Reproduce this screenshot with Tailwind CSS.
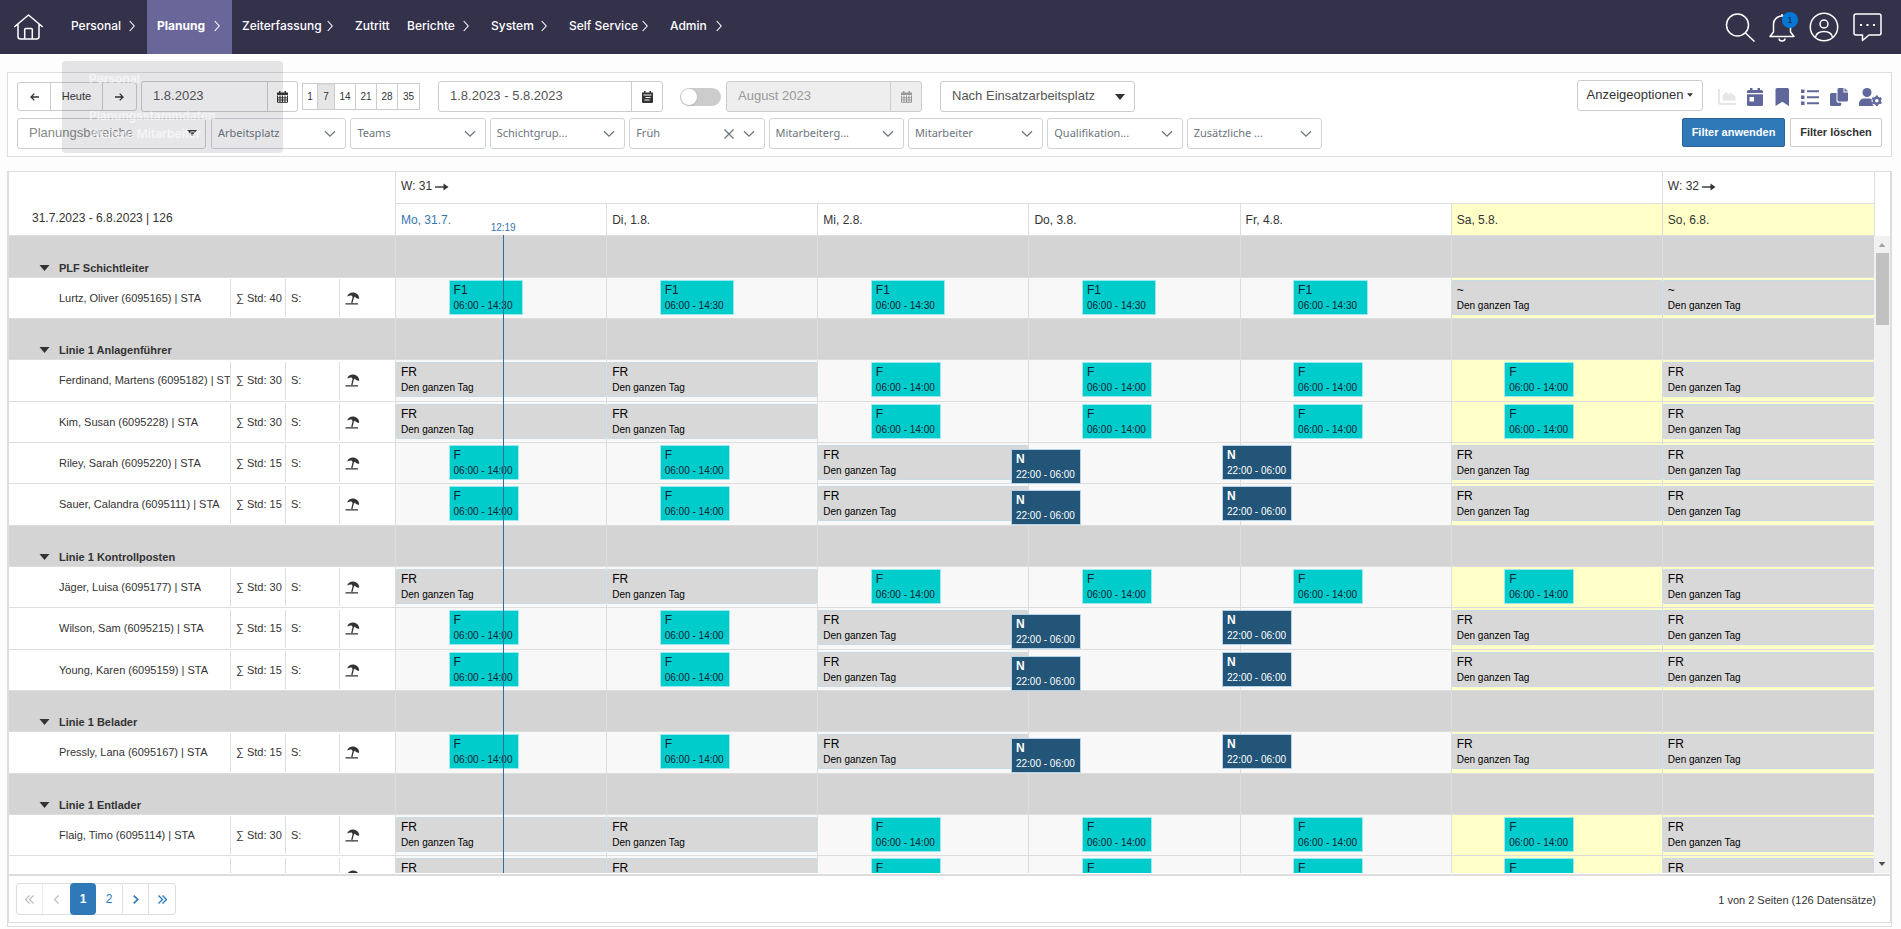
<!DOCTYPE html>
<html lang="de">
<head>
    <meta charset="UTF-8">
    <meta name="viewport" content="width=device-width, initial-scale=1.0">
    <title>Planung</title>
    <script src="https://cdn.jsdelivr.net/npm/@tailwindcss/browser@4"></script>
</head>
<body class="h-screen flex flex-col overflow-hidden bg-[#fdfdfd] text-[#333] font-['Liberation_Sans',Arial,sans-serif]">

    <!-- Icons used more than once -->
    <svg class="hidden">
        <symbol id="chevron-right" viewBox="0 0 6 12"><path d="M.7 1 5.2 6 .7 11" fill="none" stroke="currentColor" stroke-width="1.1"/></symbol>
        <symbol id="chevron-down" viewBox="0 0 12 8"><path d="M1 1.2 6 6.2l5-5" fill="none" stroke="currentColor" stroke-width="1.3"/></symbol>
        <symbol id="caret" viewBox="0 0 10 6"><path d="M0 0h10L5 6z" fill="currentColor"/></symbol>
        <symbol id="calendar" viewBox="0 0 11 12"><path d="M2 0h1.5v1.5h4V0H9v1.5h2V4H0V1.5h2z" fill="currentColor"/><path d="M.5 4.5v6.8h10V4.5M3 4.5v7M5.5 4.5v7M8 4.5v7M.5 6.8h10M.5 9h10" fill="none" stroke="currentColor" stroke-width="1"/></symbol>
        <symbol id="beach" viewBox="0 0 15 13"><path d="M2.2 4.5C3 1.5 6.500 0 9.500.8c3 .8 5 3.200 4.600 6.200l-3.200-1-.9-1.600-1 1-1.300-.4C7.200 4 6.500 3.200 5.300 3.600z" fill="currentColor"/><path d="M8.600 4 6.800 11M.5 11.800h12.500" fill="none" stroke="currentColor" stroke-width="1.300"/></symbol>
        <symbol id="arrow" viewBox="0 0 14 8"><path d="M0 4h11" stroke="currentColor" stroke-width="1.400"/><path d="M8.500.5 13.500 4l-5 3.500z" fill="currentColor"/></symbol>
    </svg>

    <!-- Navigation -->
    <header class="h-[54px] shrink-0 bg-[#34324b] text-white flex items-stretch">
        <a href="#" aria-label="Start" class="w-[61px] flex items-center pl-[14px]">
            <svg class="w-[29px] h-[26px]" viewBox="0 0 29 26" fill="none" stroke="currentColor" stroke-width="1.500" stroke-linejoin="round" stroke-linecap="round"><path d="M.8 12.500 14.500 1l13.700 11.500M4 10v12.500Q4 25 6.500 25h16q2.500 0 2.500-2.500V10M10.700 25V15.500q0-1 1-1h5.600q1 0 1 1V25"/></svg>
        </a>
        <nav class="flex items-stretch text-[12px] font-medium font-[Inter,sans-serif]">
            <a href="#" class="w-[86px] flex items-center justify-between pl-[10px] pr-[12px] pb-[2px]">Personal<svg class="w-[6px] h-[12px]"><use href="#chevron-right"/></svg></a>
            <a href="#" class="w-[85px] flex items-center justify-between pl-[10px] pr-[12px] pb-[2px] bg-[#696799] font-bold">Planung<svg class="w-[6px] h-[12px]"><use href="#chevron-right"/></svg></a>
            <a href="#" class="w-[113px] flex items-center justify-between pl-[10px] pr-[12px] pb-[2px]">Zeiterfassung<svg class="w-[6px] h-[12px]"><use href="#chevron-right"/></svg></a>
            <a href="#" class="w-[52px] flex items-center px-[10px] pb-[2px]">Zutritt</a>
            <a href="#" class="w-[84px] flex items-center justify-between pl-[10px] pr-[12px] pb-[2px]">Berichte<svg class="w-[6px] h-[12px]"><use href="#chevron-right"/></svg></a>
            <a href="#" class="w-[78px] flex items-center justify-between pl-[10px] pr-[12px] pb-[2px]">System<svg class="w-[6px] h-[12px]"><use href="#chevron-right"/></svg></a>
            <a href="#" class="w-[101px] flex items-center justify-between pl-[10px] pr-[12px] pb-[2px]">Self Service<svg class="w-[6px] h-[12px]"><use href="#chevron-right"/></svg></a>
            <a href="#" class="w-[74px] flex items-center justify-between pl-[10px] pr-[12px] pb-[2px]">Admin<svg class="w-[6px] h-[12px]"><use href="#chevron-right"/></svg></a>
        </nav>
        <div class="ml-auto flex items-center gap-[14px] pr-[19px]">
            <button aria-label="Suche"><svg class="w-[30px] h-[29px]" viewBox="0 0 30 29" fill="none" stroke="currentColor" stroke-width="1.500"><circle cx="12.500" cy="12" r="11"/><path d="m20.500 20 9 8.500"/></svg></button>
            <button aria-label="Meldungen" class="relative">
                <svg class="w-[26px] h-[29px]" viewBox="0 0 26 29" fill="none" stroke="currentColor" stroke-width="1.500" stroke-linejoin="round"><path d="M13 1v2M4.500 19V11a8.500 8 0 0 1 17 0v8l3.500 4.500H1zM10 25.500a3 2.500 0 0 0 6 0"/></svg>
                <span class="absolute -top-px left-[13px] w-4 h-4 rounded-full bg-[#0078d7] text-[#222] text-[9px] leading-4">1</span>
            </button>
            <button aria-label="Profil"><svg class="w-[30px] h-[30px]" viewBox="0 0 30 30" fill="none" stroke="currentColor" stroke-width="1.500"><circle cx="15" cy="15" r="13.700"/><circle cx="15" cy="12" r="4"/><path d="M6.500 25.500c0-8 17-8 17 0"/></svg></button>
            <button aria-label="Chat"><svg class="w-[29px] h-[29px]" viewBox="0 0 29 29" fill="none" stroke="currentColor" stroke-width="1.500" stroke-linejoin="round"><path d="M3 1h23q2 0 2 2v17q0 2-2 2H16l-6.500 5.500V22H3q-2 0-2-2V3q0-2 2-2z"/><path d="M7 12h2M13.500 12h2M20 12h2" stroke-width="2"/></svg></button>
        </div>
    </header>

    <!-- Fading menu of the active entry -->
    <div class="absolute z-30 left-[62px] top-[61px] w-[221px] h-[92px] rounded-sm bg-[#34324b]/12 pointer-events-none pl-[27px] pt-[9px] text-[12px] leading-[18px] font-semibold text-white/60 font-[Inter,sans-serif]">
        <p>Personal</p>
        <p class="mt-[19px]">Planungsstammdaten</p>
        <p>Weitere Mitarbeiter</p>
    </div>

    <main class="flex-1 min-h-0 flex flex-col gap-[14px] pl-[7px] pr-[9px] pt-[18px] pb-[2px]">

        <!-- Toolbar -->
        <section class="shrink-0 bg-white border border-[#ddd] pl-[9px] pr-[9px] pt-[8px] pb-[7px]">
            <div class="flex items-center h-[31px]">
                <div class="flex h-[29px] border border-[#ccc] rounded-[3px] bg-white divide-x divide-[#ccc] text-[11px]">
                    <button aria-label="Zurück" class="w-[33px] grid place-items-center"><svg class="w-[9px] h-[8px]" viewBox="0 0 9 8" fill="none" stroke="currentColor" stroke-width="1.300"><path d="M9 4H1M4.300.6 1 4l3.300 3.400"/></svg></button>
                    <button class="w-[52px]">Heute</button>
                    <button aria-label="Weiter" class="w-[33px] grid place-items-center"><svg class="w-[9px] h-[8px]" viewBox="0 0 9 8" fill="none" stroke="currentColor" stroke-width="1.300"><path d="M0 4h8M4.700.6 8 4 4.700 7.400"/></svg></button>
                </div>
                <div class="ml-[4px] flex w-[157px] h-[31px] border border-[#ccc] rounded-[3px] bg-white">
                    <input type="text" aria-label="Datum" value="1.8.2023" class="flex-1 min-w-0 pl-[11px] pb-[2px] text-[13px] text-[#555] border-r border-[#ccc]">
                    <button aria-label="Kalender" class="w-[29px] grid place-items-center"><svg class="w-[11px] h-[12px]"><use href="#calendar"/></svg></button>
                </div>
                <div class="ml-[4px] flex h-[27px] border border-[#ccc] bg-white divide-x divide-[#ccc] text-[10px]">
                    <button class="w-[15px]">1</button>
                    <button class="w-[17px] bg-[#e6e6e6] inset-shadow-xs">7</button>
                    <button class="w-[21px]">14</button>
                    <button class="w-[21px]">21</button>
                    <button class="w-[21px]">28</button>
                    <button class="w-[21px]">35</button>
                </div>
                <div class="ml-[18px] flex w-[225px] h-[31px] border border-[#ccc] rounded-[3px] bg-white">
                    <input type="text" aria-label="Zeitraum" value="1.8.2023 - 5.8.2023" class="flex-1 min-w-0 pl-[11px] pb-[2px] text-[13px] text-[#555] border-r border-[#ccc]">
                    <button aria-label="Zeitraum wählen" class="w-[30px] grid place-items-center"><svg class="w-[11px] h-[12px]" viewBox="0 0 11 12"><path fill="currentColor" fill-rule="evenodd" d="M2 0h1.500v1.500h4V0H9v1.500h2v9.500q0 1-1 1H1q-1 0-1-1V1.500h2zM1.500 3.500v1h8v-1zM3.500 6v1h5V6zM2.500 8.500v1h5v-1z"/></svg></button>
                </div>
                <label class="ml-[17px] relative w-[41px] h-[18px] rounded-full bg-[#ccc]">
                    <input type="checkbox" aria-label="Monat verwenden" class="peer appearance-none absolute inset-0">
                    <span class="absolute left-px top-px w-4 h-4 rounded-full bg-white shadow"></span>
                </label>
                <div class="ml-[5px] flex w-[196px] h-[31px] border border-[#ccc] rounded-[3px] bg-[#eee] text-[#999]">
                    <input type="text" aria-label="Monat" value="August 2023" disabled class="flex-1 min-w-0 pl-[11px] pb-[2px] text-[13px] border-r border-[#ccc]">
                    <button aria-label="Monat wählen" disabled class="w-[30px] grid place-items-center"><svg class="w-[11px] h-[12px]"><use href="#calendar"/></svg></button>
                </div>
                <div class="relative ml-[18px] w-[195px] h-[31px]">
                    <select aria-label="Ansicht" class="appearance-none w-full h-full pl-[11px] pb-[2px] border border-[#ccc] rounded-[3px] bg-white text-[13px] text-[#555]">
                        <option>Nach Einsatzarbeitsplatz</option>
                    </select>
                    <svg class="absolute right-[10px] top-[13px] w-[10px] h-[6px] pointer-events-none"><use href="#caret"/></svg>
                </div>
                <button class="ml-auto w-[126px] h-[31px] mb-[2px] border border-[#ccc] rounded-[3px] bg-white text-[13px] flex items-center justify-center gap-[4px] pb-px">Anzeigeoptionen<svg class="w-[6px] h-[4px]" viewBox="0 0 10 6"><path d="M0 0h10L5 6z" fill="currentColor"/></svg></button>
                <div class="ml-[15px] flex items-center gap-[11px] text-[#60689b]">
                    <button aria-label="Diagramm" class="text-[#e6e6e6]"><svg class="w-[18px] h-[18px]" viewBox="0 0 18 18" fill="none"><path d="M1 1v13q0 2 2 2h15" stroke="currentColor" stroke-width="2"/><path fill="currentColor" d="M4.500 12.500v-5L8 4l2.500 2.500L13 4.500l4.500 4v4z"/></svg></button>
                    <button aria-label="Tagesansicht"><svg class="w-[16px] h-[18px]" viewBox="0 0 16 18"><path fill="currentColor" d="M3 0h2.500v2h5V0H13v2h1.500Q16 2 16 3.500V5H0V3.500Q0 2 1.500 2H3z"/><path fill="currentColor" fill-rule="evenodd" d="M0 6.200h16v10.300q0 1.500-1.500 1.500h-13Q0 18 0 16.500zM2.500 9v4.500H7V9z"/></svg></button>
                    <button aria-label="Lesezeichen"><svg class="w-[16px] h-[18px]" viewBox="0 0 16 18"><path fill="currentColor" d="M1.500 1.500Q1.500 0 3 0h10.500Q15 0 15 1.500V18l-6.700-4.200L1.500 18z"/></svg></button>
                    <button aria-label="Liste"><svg class="w-[18px] h-[18px]" viewBox="0 0 18 18"><path fill="currentColor" d="M0 1.500h3.500V5H0zM0 7.500h3.500V11H0zM0 13.500h3.500V17H0zM6 2.200h12v2H6zM6 8.200h12v2H6zM6 14.200h12v2H6z"/></svg></button>
                    <button aria-label="Kopieren"><svg class="w-[18px] h-[18px]" viewBox="0 0 18 18"><path fill="currentColor" d="M7.500 1.500Q7.500 0 9 0h4.500v4.500H18V12q0 1.500-1.500 1.500H9q-1.500 0-1.500-1.500zM14.500 0 18 3.500h-3.500zM1.500 5h5v8q0 1.700 1.700 1.700h3v1.800q0 1.500-1.500 1.500H1.500Q0 18 0 16.500v-10Q0 5 1.500 5z"/></svg></button>
                    <button aria-label="Mitarbeiter verwalten"><svg class="w-[23px] h-[18px]" viewBox="0 0 23 18"><circle cx="8" cy="4.500" r="4.500" fill="currentColor"/><path fill="currentColor" d="M0 18v-2q0-5.500 5.500-5.500h5q1.500 0 2.200.4-.7 2.500.6 4.100-.3 1.500 1.500 3z"/><circle cx="17.800" cy="12.700" r="3" fill="none" stroke="currentColor" stroke-width="2.400"/><path d="M17.800 7.400v2M17.800 16v2M13.200 10l1.700 1M20.700 14.400l1.700 1M13.200 15.400l1.700-1M20.700 11l1.700-1" stroke="currentColor" stroke-width="2.200"/></svg></button>
                </div>
            </div>

            <!-- Filters -->
            <div class="mt-[6px] flex items-start h-[31px]">
                <div class="relative w-[189px] h-[31px]">
                    <select aria-label="Planungsbereiche" class="appearance-none w-full h-full pl-[11px] pb-[2px] border border-[#ccc] rounded-[3px] bg-white text-[13px] text-[#888]">
                        <option>Planungsbereiche</option>
                    </select>
                    <svg class="absolute right-[9px] top-[12px] w-[10px] h-[6px] pointer-events-none"><use href="#caret"/></svg>
                </div>
                <div id="filters" class="ml-[5px] grid grid-cols-8 gap-1 w-[1111px] text-[11px] text-[#6c757d] font-['Noto_Sans','Open_Sans',sans-serif]"></div>
                <div class="ml-auto flex gap-[5px] text-[11px] font-bold">
                    <button class="w-[103px] h-[29px] rounded-[2px] border border-[#2a6496] bg-[#2f79b9] text-white">Filter anwenden</button>
                    <button class="w-[92px] h-[29px] rounded-[2px] border border-[#ccc] bg-white">Filter löschen</button>
                </div>
            </div>
        </section>

        <!-- Schedule -->
        <section class="flex-1 min-h-0 flex flex-col bg-white border border-[#ddd] pb-[3px]">
            <div class="flex-1 min-h-0 flex flex-col border-x border-b border-[#ddd]">
                <div class="flex-1 min-h-0 flex">
                    <div class="flex-1 min-w-0 overflow-hidden">
                        <table class="w-full table-fixed border-separate border-spacing-0 text-[11px]">
                            <colgroup>
                                <col class="w-[222px]"><col class="w-[55px]"><col class="w-[54px]"><col class="w-[56px]">
                                <col><col><col><col><col><col><col>
                            </colgroup>
                            <thead class="text-[12px] text-left">
                                <tr class="h-[32px]">
                                    <th colspan="4" rowspan="2" class="border-r border-b border-[#ddd] pl-[23px] pt-[28px] font-normal">31.7.2023 - 6.8.2023 | 126</th>
                                    <th colspan="6" class="border-r border-b border-[#ddd] pl-[5px] pb-[3px] font-normal">W: 31 <svg class="inline w-[14px] h-[8px]"><use href="#arrow"/></svg></th>
                                    <th class="border-b border-[#ddd] pl-[5px] pb-[3px] font-normal">W: 32 <svg class="inline w-[14px] h-[8px]"><use href="#arrow"/></svg></th>
                                </tr>
                                <tr class="h-[32px]">
                                    <th class="relative z-20 border-r border-b border-[#ddd] pl-[5px] font-normal text-[#3a76ad]">Mo, 31.7.
                                        <!-- current time -->
                                        <span class="absolute left-[51%] top-full h-screen w-px bg-[#2f6da3]"></span>
                                        <span class="absolute left-[51%] bottom-0 -translate-x-1/2 bg-white text-[10px] leading-[15px]">12:19</span>
                                    </th>
                                    <th class="border-r border-b border-[#ddd] pl-[5px] font-normal">Di, 1.8.</th>
                                    <th class="border-r border-b border-[#ddd] pl-[5px] font-normal">Mi, 2.8.</th>
                                    <th class="border-r border-b border-[#ddd] pl-[5px] font-normal">Do, 3.8.</th>
                                    <th class="border-r border-b border-[#ddd] pl-[5px] font-normal">Fr, 4.8.</th>
                                    <th class="border-r border-b border-[#ddd] pl-[5px] font-normal bg-[#ffffc8]">Sa, 5.8.</th>
                                    <th class="border-b border-[#ddd] pl-[5px] font-normal bg-[#ffffc8]">So, 6.8.</th>
                                </tr>
                            </thead>
                            <tbody id="schedule"></tbody>
                        </table>
                    </div>
                    <!-- Scrollbar -->
                    <div class="w-[16px] shrink-0 flex flex-col items-center bg-[#f1f1f1]">
                        <div class="w-full h-[64px] bg-white border-l border-[#ddd]"></div>
                        <svg class="mt-[7px] w-[8px] h-[4px] rotate-180 text-[#a3a3a3]" viewBox="0 0 10 6"><path d="M0 0h10L5 6z" fill="currentColor"/></svg>
                        <div class="mt-[6px] w-[13px] h-[72px] bg-[#c1c1c1]"></div>
                        <svg class="mt-auto mb-[7px] w-[8px] h-[4px] text-[#505050]" viewBox="0 0 10 6"><path d="M0 0h10L5 6z" fill="currentColor"/></svg>
                    </div>
                </div>

                <!-- Pager -->
                <footer class="mt-px shrink-0 border-t-2 border-[#ddd] h-[48px] flex items-center justify-between pl-[7px] pr-[14px] text-[11px]">
                    <nav class="flex h-[32px] border border-[#ddd] rounded-[3px] text-[12px] text-[#2f79b9]">
                        <button aria-label="Erste Seite" disabled class="w-[26px] grid place-items-center border-r border-[#eee] text-[#bbb]"><svg class="w-[9px] h-[9px]" viewBox="0 0 9 9" fill="none" stroke="currentColor" stroke-width="1.100"><path d="M4.500.5l-4 4 4 4M8.500.5l-4 4 4 4"/></svg></button>
                        <button aria-label="Vorige Seite" disabled class="w-[27px] grid place-items-center text-[#bbb]"><svg class="w-[5px] h-[9px]" viewBox="0 0 5 9" fill="none" stroke="currentColor" stroke-width="1.100"><path d="M4.500.5l-4 4 4 4"/></svg></button>
                        <button class="w-[26px] -my-px rounded-[4px] bg-[#2f79b9] text-white font-bold">1</button>
                        <button class="w-[27px] border-r border-[#ddd] rounded-r-[3px]">2</button>
                        <button aria-label="Nächste Seite" class="w-[26px] grid place-items-center border-r border-[#ddd]"><svg class="w-[6px] h-[9px]" viewBox="0 0 6 9" fill="none" stroke="currentColor" stroke-width="1.700"><path d="M.7.700l4 3.800-4 3.800"/></svg></button>
                        <button aria-label="Letzte Seite" class="w-[26px] grid place-items-center"><svg class="w-[9px] h-[9px]" viewBox="0 0 9 9" fill="none" stroke="currentColor" stroke-width="1.400"><path d="M.5.5l4 4-4 4M4.500.5l4 4-4 4"/></svg></button>
                    </nav>
                    <span class="pt-[2px]">1 von 2 Seiten (126 Datensätze)</span>
                </footer>
            </div>
        </section>
    </main>

    <script>
        const filters = [
            ['Arbeitsplatz'], ['Teams'], ['Schichtgrup...'], ['Früh', true],
            ['Mitarbeiterg...'], ['Mitarbeiter'], ['Qualifikation...'], ['Zusätzliche ...']
        ];

        document.getElementById('filters').innerHTML = filters.map(([label, clearable]) => `
            <button class="flex items-center h-[31px] pl-[6px] pr-[9px] gap-[9px] border border-[#ced4da] rounded-[3px] bg-white">
                <span class="mr-auto">${label}</span>
                ${clearable ? '<svg class="w-[10px] h-[10px]" viewBox="0 0 10 10" fill="none" stroke="currentColor" stroke-width="1.200"><path d="M.5.5l9 9M9.500.5l-9 9"/></svg>' : ''}
                <svg class="w-[12px] h-[8px]"><use href="#chevron-down"/></svg>
            </button>
        `).join('');

        // start and length in hours, counted from midnight of the day
        const shifts = {
            'F1': { name: 'F1', time: '06:00 - 14:30', start: 6, hours: 8.5, style: 'top-[2px] bg-[#00cccc] border-[#9be9ee] text-[#123]' },
            'F': { name: 'F', time: '06:00 - 14:00', start: 6, hours: 8, style: 'top-[2px] bg-[#00cccc] border-[#9be9ee] text-[#123]' },
            'N': { name: '<b>N</b>', time: '22:00 - 06:00', start: 22, hours: 8, style: 'top-[2px] z-10 bg-[#225577] border-[#b5d3e6] text-white' },
            // night shift that overlaps a day off and is moved down
            'N2': { name: '<b>N</b>', time: '22:00 - 06:00', start: 22, hours: 8, style: 'top-[6px] z-10 bg-[#225577] border-[#b5d3e6] text-white' },
            'FR': { name: 'FR', time: 'Den ganzen Tag', start: 0, hours: 24, style: 'top-[2px] bg-[#d8d8d8] border-[#c9dae5] text-black' },
            '~': { name: '~', time: 'Den ganzen Tag', start: 0, hours: 24, style: 'top-[2px] bg-[#d8d8d8] border-[#c9dae5] text-black' }
        };

        const early = ['FR', 'FR', 'F', 'F', 'F', 'F', 'FR'];
        const night = ['F', 'F', 'FR N2', 'N', '', 'FR', 'FR'];

        const groups = [
            ['PLF Schichtleiter', [['Lurtz, Oliver (6095165) | STA', 40, ['F1', 'F1', 'F1', 'F1', 'F1', '~', '~']]]],
            ['Linie 1 Anlagenführer', [
                ['Ferdinand, Martens (6095182) | STA', 30, early],
                ['Kim, Susan (6095228) | STA', 30, early],
                ['Riley, Sarah (6095220) | STA', 15, night],
                ['Sauer, Calandra (6095111) | STA', 15, night]
            ]],
            ['Linie 1 Kontrollposten', [
                ['Jäger, Luisa (6095177) | STA', 30, early],
                ['Wilson, Sam (6095215) | STA', 15, night],
                ['Young, Karen (6095159) | STA', 15, night]
            ]],
            ['Linie 1 Belader', [['Pressly, Lana (6095167) | STA', 15, night]]],
            ['Linie 1 Entlader', [
                ['Flaig, Timo (6095114) | STA', 30, early],
                ['', '', early]
            ]]
        ];

        function shiftBox(key) {
            const s = shifts[key];
            return `<div class="absolute h-[35px] pl-[4px] pt-[2px] border rounded-[1px] whitespace-nowrap leading-[15px] text-[10px] ${s.style}"
                style="left: ${s.start / 24 * 100}%; width: ${s.hours / 24 * 100}%"><div class="text-[12px]">${s.name}</div>${s.time}</div>`;
        }

        function dayCell(keys, day) {
            const color = day > 4 ? 'bg-[#ffffc8]' : 'bg-[#f8f8f8]';
            const border = day < 6 ? 'border-r' : '';
            return `<td class="relative p-0 border-b border-[#ddd] ${border} ${color}">${keys.split(' ').filter(Boolean).map(shiftBox).join('')}</td>`;
        }

        function personRow([name, hours, days]) {
            return `<tr class="h-[41px] nth-[3n+1]:h-[42px]">
                <td class="p-0 border-b border-[#ddd]"><div class="h-[38px] flex items-center pl-[50px] border-r border-[#ddd] overflow-hidden whitespace-nowrap">${name}</div></td>
                <td class="p-0 border-b border-[#ddd]"><div class="h-[38px] flex items-center pl-[5px] border-r border-[#ddd] whitespace-nowrap">${name ? '∑ Std: ' + hours : ''}</div></td>
                <td class="p-0 border-b border-[#ddd]"><div class="h-[38px] flex items-center pl-[5px] border-r border-[#ddd]">${name ? 'S:' : ''}</div></td>
                <td class="p-0 border-b border-r border-[#ddd]"><svg class="ml-[5px] w-[15px] h-[13px]"><use href="#beach"/></svg></td>
                ${days.map(dayCell).join('')}
            </tr>`;
        }

        function groupRow(title) {
            const cell = '<td class="border-b border-r border-[#ddd]"></td>';
            return `<tr class="h-[41px] nth-[3n+1]:h-[42px] bg-[#d4d4d4]">
                <td colspan="4" class="p-0 align-bottom border-b border-r border-[#ddd]">
                    <button class="flex items-center gap-[9px] ml-[30px] mb-px font-bold leading-[16px]"><svg class="w-[11px] h-[6px]"><use href="#caret"/></svg>${title}</button>
                </td>
                ${cell.repeat(6)}<td class="border-b border-[#ddd]"></td>
            </tr>`;
        }

        document.getElementById('schedule').innerHTML = groups.map(([title, people]) =>
            groupRow(title) + people.map(personRow).join('')
        ).join('');
    </script>
</body>
</html>
